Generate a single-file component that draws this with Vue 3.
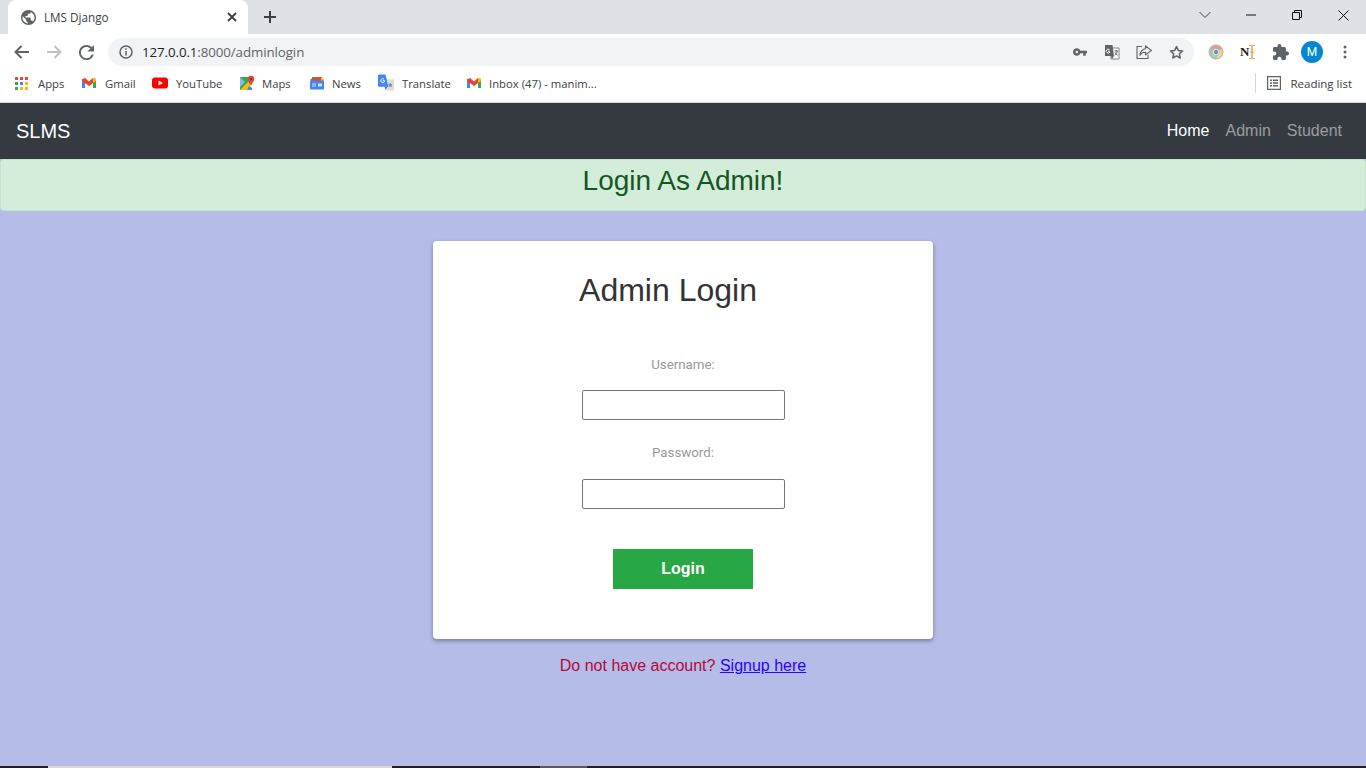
<script setup>
const bookmarks = [
  { name: 'Apps', icon: 'apps', w: 67, gap: 8 },
  { name: 'Gmail', icon: 'gmail', w: 71, gap: 8 },
  { name: 'YouTube', icon: 'yt', w: 87, gap: 8 },
  { name: 'Maps', icon: 'maps', w: 70, gap: 7 },
  { name: 'News', icon: 'news', w: 69, gap: 7 },
  { name: 'Translate', icon: 'tr', w: 88, gap: 8 },
  { name: 'Inbox (47) - manim...', icon: 'gmail', w: 150, gap: 7 }
]
const appColors = ['#ea4335','#ea4335','#ea4335','#34a853','#4285f4','#fbbc04','#34a853','#fbbc04','#fbbc04']
</script>

<template>
  <div class="page">
    <div class="tabstrip">
      <div class="tab">
        <svg class="globe" width="15" height="15" viewBox="2 2 20 20">
          <path fill="#5f6368" d="M12 2C6.480 2 2 6.480 2 12s4.480 10 10 10 10-4.480 10-10S17.520 2 12 2zm-1 17.930c-3.950-.49-7-3.850-7-7.930 0-.62.08-1.210.21-1.790L9 15v1c0 1.100.9 2 2 2v1.930zm6.900-2.540c-.26-.81-1-1.390-1.900-1.390h-1v-3c0-.55-.45-1-1-1H8v-2h2c.55 0 1-.45 1-1V7h2c1.100 0 2-.9 2-2v-.41c2.930 1.190 5 4.060 5 7.410 0 2.080-.8 3.970-2.100 5.390z"/>
        </svg>
        <span class="tabtitle">LMS Django</span>
        <svg class="tabclose" width="10" height="10" viewBox="0 0 10 10"><path d="M1 1l8 8M9 1l-8 8" stroke="#3c4043" stroke-width="1.800"/></svg>
      </div>
      <svg class="newtab" width="12" height="12" viewBox="0 0 12 12"><path d="M6 0v12M0 6h12" stroke="#3c4043" stroke-width="2"/></svg>
      <div class="winctrls">
        <svg class="wc" width="12" height="8" viewBox="0 0 12 8"><path d="M.5 1l5.500 5.500L11.500 1" fill="none" stroke="#3c4043"/></svg>
        <svg class="wc" width="10" height="2" viewBox="0 0 10 2"><path d="M0 1h10" stroke="#111"/></svg>
        <svg class="wc" width="10" height="10" viewBox="0 0 10 10"><path d="M.5 2.500h7v7h-7zM2.500 2.500V.5h7v7h-2" fill="none" stroke="#111"/></svg>
        <svg class="wc" width="11" height="11" viewBox="0 0 11 11"><path d="M.5.5l10 10M10.500.5l-10 10" stroke="#111"/></svg>
      </div>
    </div>

    <div class="toolbar">
      <svg class="nav" width="16" height="14" viewBox="0 0 16 14"><path d="M15 7H2M7.500 1L1.500 7l6 6" fill="none" stroke="#5f6368" stroke-width="2"/></svg>
      <svg class="nav" width="16" height="14" viewBox="0 0 16 14"><path d="M1 7h13M8.500 1l6 6-6 6" fill="none" stroke="#bdc1c6" stroke-width="2"/></svg>
      <svg class="nav" width="15" height="15" viewBox="4 4 16 16"><path fill="#5f6368" d="M17.650 6.350C16.200 4.900 14.210 4 12 4c-4.420 0-7.990 3.580-7.990 8s3.570 8 7.990 8c3.730 0 6.840-2.550 7.730-6h-2.080c-.82 2.330-3.040 4-5.650 4-3.310 0-6-2.690-6-6s2.690-6 6-6c1.660 0 3.140.69 4.220 1.780L13 11h7V4l-2.350 2.350z"/></svg>
      <div class="omnibox">
        <svg width="14" height="14" viewBox="0 0 14 14"><circle cx="7" cy="7" r="6" fill="none" stroke="#5f6368" stroke-width="1.500"/><path d="M7 6v4.500M7 3.300v1.500" stroke="#5f6368" stroke-width="1.500"/></svg>
        <span class="url"><span class="host">127.0.0.1</span>:8000/adminlogin</span>
        <span class="omni-icons">
          <svg width="14" height="8" viewBox="1 6 22 12"><path fill="#5f6368" d="M12.650 10C11.830 7.670 9.610 6 7 6c-3.310 0-6 2.690-6 6s2.690 6 6 6c2.610 0 4.830-1.670 5.650-4H17v4h4v-4h2v-4H12.650zM7 14c-1.100 0-2-.9-2-2s.9-2 2-2 2 .9 2 2-.9 2-2 2z"/></svg>
          <svg class="tr-omni" width="16" height="16" viewBox="0 0 16 16"><path d="M7 4h8v11H7z" fill="#fff" stroke="#80868b"/><path d="M1 1h7.500l1.500 11H1z" fill="#5f6368"/><path d="M7 12h3l-2 3z" fill="#5f6368"/><path d="M6 8a2 2 0 1 1-.5-2.500M4 7.200h2" fill="none" stroke="#fff"/><path d="M10.500 7h3.500M12.200 6v1M13.200 7c-.2 1.800-1.200 3.200-2.500 4M11 8.500c.5 1.200 1.500 2.200 2.700 2.700" fill="none" stroke="#5f6368"/></svg>
          <svg width="16" height="14" viewBox="0 0 16 14"><path d="M6 1.500H1v12h11v-4" fill="none" stroke="#5f6368" stroke-width="1.100"/><path d="M9.500 1l6 4.500-6 4.200V7.300C7 7.300 5 8.500 3.800 10.500 4.200 7 6 4.200 9.500 3.700z" fill="none" stroke="#5f6368" stroke-width="1.100"/></svg>
          <svg width="15" height="14" viewBox="0 0 15 14"><path d="M7.500 1.500l1.800 3.900 4.200.5-3.100 2.900.8 4.200-3.700-2.100-3.700 2.100.8-4.200L1.500 5.900l4.200-.5z" fill="none" stroke="#5f6368" stroke-width="1.500" stroke-linejoin="round"/></svg>
        </span>
      </div>
      <div class="ext">
        <svg width="16" height="16" viewBox="0 0 16 16"><circle cx="8" cy="8" r="7.500" fill="#b8b4ac"/><path d="M8 1.500a6.500 6.500 0 0 1 5.700 3.300H8a3.300 3.300 0 0 0-3 1.800L3.200 3.600A6.500 6.500 0 0 1 8 1.500z" fill="#e89a8e"/><path d="M14 5.800A6.500 6.500 0 0 1 8 14.500l2.700-4.500a3.300 3.300 0 0 0 .2-4.200z" fill="#ecd98c"/><path d="M7.300 14.500A6.500 6.500 0 0 1 2.500 4.500l2.800 4.800a3.300 3.300 0 0 0 3.400 1.900z" fill="#a8cca4"/><circle cx="8" cy="8" r="2.900" fill="#f4f4f4"/><circle cx="8" cy="8" r="2.200" fill="#5a96d8"/></svg>
        <span class="notion"><span class="nletter">N</span><svg width="6" height="14" viewBox="0 0 6 14"><path d="M0 .5h2q1 0 1 1v11q0 1-1 1H0M6 .5H4q-1 0-1 1v11q0 1 1 1h2M1 7h4" stroke="#f09a4a" fill="none"/></svg></span>
        <svg width="16" height="16" viewBox="2 1 21 21"><path fill="#5f6368" d="M20.500 11H19V7c0-1.100-.9-2-2-2h-4V3.500C13 2.120 11.880 1 10.500 1S8 2.120 8 3.500V5H4c-1.100 0-1.990.9-1.990 2v3.800H3.500c1.490 0 2.700 1.210 2.700 2.700s-1.210 2.700-2.700 2.700H2V20c0 1.100.9 2 2 2h3.800v-1.500c0-1.490 1.210-2.700 2.700-2.700 1.490 0 2.700 1.210 2.700 2.700V22H17c1.100 0 2-.9 2-2v-4h1.500c1.380 0 2.500-1.120 2.500-2.500S21.880 11 20.500 11z"/></svg>
        <span class="avatar">M</span>
        <svg width="4" height="14" viewBox="0 0 4 14"><circle cx="2" cy="2" r="1.500" fill="#5f6368"/><circle cx="2" cy="7" r="1.500" fill="#5f6368"/><circle cx="2" cy="12" r="1.500" fill="#5f6368"/></svg>
      </div>
    </div>

    <div class="bookmarks">
      <div v-for="b in bookmarks" :key="b.name" class="bm" :style="{ width: b.w + 'px', gap: b.gap + 'px' }">
        <span v-if="b.icon === 'apps'" class="appsgrid"><i v-for="(c, i) in appColors" :key="i" :style="{ background: c }"></i></span>
        <svg v-else-if="b.icon === 'gmail'" width="16" height="16" viewBox="0 0 16 16"><path d="M1 4v9h3V7z" fill="#4285f4"/><path d="M15 4v9h-3V7z" fill="#34a853"/><path d="M1 4.200L4 3l4 3.500L12 3l3 1.200V6l-7 5-7-5z" fill="#ea4335"/><path d="M12 3l3 .4V6l-3 2z" fill="#fbbc04"/></svg>
        <svg v-else-if="b.icon === 'yt'" width="16" height="16" viewBox="0 0 16 16"><rect y="2.500" width="16" height="11" rx="3" fill="#f00"/><path d="M6.500 5.500L11 8l-4.500 2.500z" fill="#fff"/></svg>
        <svg v-else-if="b.icon === 'maps'" width="16" height="16" viewBox="0 0 16 16"><path d="M1 2h10v13H1z" fill="#34a853"/><path d="M1 15L9.500 6.500 13 15z" fill="#fbbc04"/><path d="M1 2l5 5-5 5z" fill="#8ab4f8"/><path d="M13 15H8l2-4 3 2z" fill="#4285f4"/><circle cx="12" cy="4" r="3.200" fill="#ea4335"/><path d="M9.500 5.500L12 11l2.500-5.500z" fill="#ea4335"/><circle cx="12" cy="4" r="1" fill="#a50e0e"/></svg>
        <svg v-else-if="b.icon === 'news'" width="16" height="16" viewBox="0 0 16 16"><path d="M3 2h9l1 3H3z" fill="#34a853"/><path d="M1.500 4l11-2 2 3v3H2z" fill="#ea4335"/><path d="M12 2.500l2.500 2V8H12z" fill="#fbbc04"/><rect x="1" y="5.500" width="14" height="9" rx="1" fill="#4285f4"/><path d="M3 8.500h4v1H3zM3 10.500h4v1H3zM9 8.500h4v3H9z" fill="#d2e3fc"/></svg>
        <svg v-else width="16" height="18" viewBox="0 0 17 18"><path d="M7 5h10v12H8z" fill="#dadce0"/><path d="M0 1a1 1 0 0 1 1-1h7l3 13H1a1 1 0 0 1-1-1z" fill="#4285f4"/><path d="M7 13l3 0-2 3z" fill="#3367d6"/><path d="M7 6.500a2 2 0 1 1-.6-1.500M5 6.500h2" fill="none" stroke="#fff"/><path d="M13 8.500l.8 1.800 1.700.2-1.300 1.200.4 1.800-1.600-1-1.600 1 .4-1.800-1.300-1.200 1.700-.2z" fill="#80868b"/></svg>
        <span class="bmname">{{ b.name }}</span>
      </div>
      <div class="reading">
        <svg width="14" height="14" viewBox="0 0 14 14"><path d="M.6.6h12.800v12.800H.6z" fill="none" stroke="#5f6368" stroke-width="1.200"/><path d="M3 3.500h2v1.500H3zM3 6.300h2v1.500H3zM3 9.100h2v1.500H3zM6 3.500h5v1.500H6zM6 6.300h5v1.500H6zM6 9.100h5v1.500H6z" fill="#5f6368"/></svg>
        <span class="bmname rl">Reading list</span>
      </div>
    </div>

    <nav class="navbar">
      <span class="brand">SLMS</span>
      <div class="navlinks">
        <span class="active">Home</span>
        <span>Admin</span>
        <span>Student</span>
      </div>
    </nav>

    <main class="content">
      <div class="alert">Login As Admin!</div>
      <div class="card">
        <h1>Admin Login</h1>
        <label class="lbl first">Username:</label>
        <input class="field" type="text" />
        <label class="lbl second">Password:</label>
        <input class="field" type="password" />
        <button class="login" type="button">Login</button>
      </div>
      <p class="signup">Do not have account? <a href="#">Signup here</a></p>
    </main>

    <div class="taskstrip"><i class="s1"></i><i class="s2"></i><i class="s3"></i><i class="s4"></i></div>
  </div>
</template>

<style>
html, body { margin: 0; padding: 0; overflow: hidden; }
</style>

<style scoped>
.page { width: 1366px; height: 768px; display: flex; flex-direction: column; overflow: hidden; background: #b6bce8; font-family: "Liberation Sans", Arial, sans-serif; }
.tabstrip { height: 34px; background: #dee1e6; display: flex; align-items: flex-start; flex: none; }
.tab { width: 240px; height: 34px; margin-left: 8px; background: #fff; border-radius: 8px 8px 0 0; display: flex; align-items: center; box-sizing: border-box; padding: 0 0 0 13px; flex: none; }
.globe { flex: none; }
.tabtitle { font: 11.700px "Open Sans", "Noto Sans", sans-serif; color: #3c4043; margin-left: 8px; flex: 1; }
.tabclose { margin-right: 11px; flex: none; }
.newtab { margin: 11px 0 0 16px; flex: none; }
.winctrls { margin-left: auto; display: flex; height: 30px; align-items: center; }
.wc { display: block; }
.wc:nth-child(1) { margin-right: 35px; }
.wc:nth-child(2) { margin-right: 36px; }
.wc:nth-child(3) { margin-right: 36px; }
.wc:nth-child(4) { margin-right: 17px; }
.toolbar { height: 36px; background: #fff; display: flex; align-items: center; padding-left: 14px; flex: none; }
.nav { margin-right: 16px; flex: none; }
.nav:nth-child(2) { margin-right: 17px; }
.nav:nth-child(3) { margin-right: 14px; }
.omnibox { width: 1086px; height: 28px; background: #f1f3f4; border-radius: 14px; display: flex; align-items: center; padding: 0 10px 0 11px; box-sizing: border-box; flex: none; }
.url { font: 13.330px "Open Sans", "Noto Sans", sans-serif; color: #5f6368; margin-left: 9px; letter-spacing: -.1px; }
.host { color: #202124; }
.omni-icons { margin-left: auto; display: flex; align-items: center; gap: 17px; }
.tr-omni { margin-right: -1px; }
.ext { display: flex; align-items: center; margin-left: 14px; }
.ext > svg:first-child { margin-right: 16px; }
.notion { display: flex; align-items: center; margin-right: 16px; width: 17px; }
.nletter { font: bold 13px "Liberation Serif", serif; color: #222; }
.ext > svg:nth-child(3) { margin-right: 12px; }
.avatar { width: 22px; height: 22px; border-radius: 50%; background: #0288d1; color: #fff; font: 12px "Roboto", sans-serif; display: flex; align-items: center; justify-content: center; margin-right: 20px; }
.bookmarks { height: 33px; background: #fff; display: flex; align-items: center; padding: 0 0 6px 14px; box-sizing: border-box; border-bottom: 1px solid #d3d5d8; flex: none; }
.bm { display: flex; align-items: center; flex: none; box-sizing: border-box; }
.bmname { font: 11.300px "Open Sans", "Noto Sans", sans-serif; color: #3c4043; white-space: nowrap; }
.rl { font-size: 11.500px; }
.appsgrid { display: grid; grid-template-columns: repeat(3, 3px); gap: 2px; width: 13px; margin: 0 2px 0 1px; }
.appsgrid i { width: 3px; height: 3px; display: block; }
.reading { margin-left: auto; margin-right: 14px; display: flex; align-items: center; gap: 9px; border-left: 1px solid #d3d5d8; padding-left: 11px; height: 20px; }
.navbar { height: 56px; background: #343a40; display: flex; align-items: center; justify-content: space-between; padding: 0 16px; flex: none; }
.brand { color: #fff; font-size: 20px; }
.navlinks { display: flex; gap: 16px; font-size: 16px; color: rgba(255,255,255,.5); padding-right: 8px; }
.active { color: #fff; }
.content { flex: 1; min-height: 0; display: flex; flex-direction: column; align-items: center; }
.alert { width: 100%; box-sizing: border-box; height: 52px; background: #d4edda; border: 1px solid #c3e6cb; border-radius: 4px; color: #155724; font-size: 28px; text-align: center; line-height: 42px; flex: none; }
.card { width: 500px; height: 398px; margin-top: 30px; background: #fff; border-radius: 4px; box-shadow: 0 2px 4px rgba(0,0,0,.35); display: flex; flex-direction: column; align-items: center; box-sizing: border-box; flex: none; }
.card h1 { margin: 28px 0 0 -30px; font-weight: 400; font-size: 32px; line-height: 42px; color: #333; }
.lbl { font: 13.300px/18px "Roboto", sans-serif; color: #999; }
.first { margin-top: 45px; }
.second { margin-top: 24px; }
.field { width: 203px; height: 30px; box-sizing: border-box; border: 1px solid #767676; border-radius: 2px; background: #fff; margin-top: 16px; padding: 0; outline: none; flex: none; }
.second + .field { margin-top: 17px; }
.login { width: 140px; height: 40px; margin-top: 40px; border: 0; background: #28a745; color: #fff; font: bold 16px "Liberation Sans", Arial, sans-serif; padding: 0; flex: none; }
.signup { margin: 18px 0 0; font-size: 16px; line-height: 18px; color: #b5083c; }
.signup a { color: #2a00ff; text-decoration: underline; }
.taskstrip { height: 2px; flex: none; background: #202124; display: flex; }
.taskstrip i { display: block; height: 2px; }
.s1 { width: 48px; }
.s2 { width: 344px; background: #d8d8de; }
.s3 { width: 148px; }
.s4 { width: 47px; background: #5a5a5e; }
</style>
